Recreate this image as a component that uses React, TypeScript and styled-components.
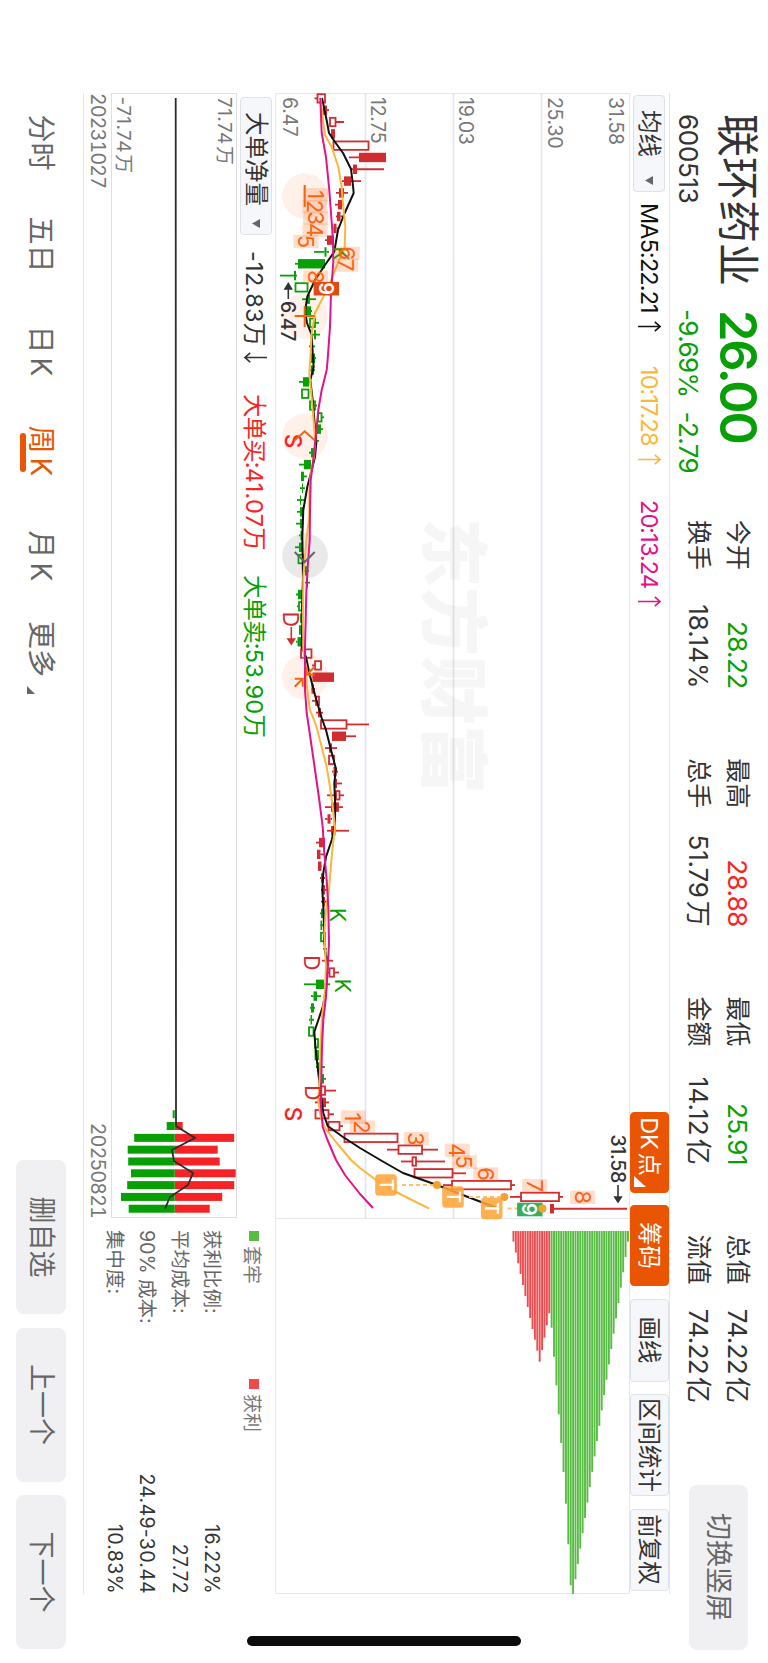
import React from "react";
import styled, { createGlobalStyle } from "styled-components";

const STAGE_WIDTH = 1663;
const STAGE_HEIGHT = 768;

const GREEN = "#06a006";
const RED = "#f82424";
const ORANGE = "#ea5504";
const CANDLE_RED = "#d12c30";
const GRID = "#e3e7ee";

const GlobalStyle = createGlobalStyle`
  body {
    margin: 0;
    background: #fff;
    font-family: Inter, "Noto Sans CJK SC", sans-serif;
    color: #333;
  }
  * {
    box-sizing: border-box;
  }
`;

const Screen = styled.div`
  width: ${STAGE_HEIGHT}px;
  height: ${STAGE_WIDTH}px;
  overflow: hidden;
`;

// The page is designed in landscape and turned onto the portrait screen.
const Stage = styled.div`
  display: grid;
  grid-template-rows: 98px 587px 83px;
  width: ${STAGE_WIDTH}px;
  height: ${STAGE_HEIGHT}px;
  transform-origin: 0 0;
  transform: translateX(${STAGE_HEIGHT}px) rotate(90deg);
  white-space: nowrap;
`;

const Header = styled.header`
  display: flex;
  padding-left: 114px;
`;

const Quote = styled.div`
  display: grid;
  grid-template-columns: 196px 210px;
  grid-template-rows: 60px 39px;
  align-items: center;
`;

const StockName = styled.h1`
  margin: 0;
  font-size: 43px;
  font-weight: 400;
  line-height: 60px;
`;

const Price = styled.div`
  font-size: 50.5px;
  font-weight: 600;
  line-height: 60px;
  letter-spacing: -2.2px;
  color: ${GREEN};
`;

const Code = styled.div`
  font-size: 26px;
  line-height: 39px;
  letter-spacing: -0.3px;
`;

const Change = styled(Code)`
  display: flex;
  gap: 14px;
  margin-left: -1px;
  letter-spacing: -0.6px;
  color: ${GREEN};
`;

const Stats = styled.div`
  display: grid;
  grid-template-columns: repeat(4, 168.5px);
  grid-auto-rows: 39px;
  column-gap: 69.7px;
  padding-top: 11px;
`;

const Stat = styled.div`
  display: flex;
  justify-content: space-between;
  font-size: 25px;
  line-height: 39px;
`;

const StatValue = styled.span<{ $color?: string; $spacing?: number }>`
  font-size: 26px;
  letter-spacing: ${({ $spacing }) => $spacing ?? -0.6}px;
  color: ${({ $color }) => $color ?? "inherit"};
`;

const Unit = styled.span`
  margin-left: 3px;
  letter-spacing: 0;
`;

const SoftButton = styled.button`
  border: 0;
  border-radius: 8px;
  background: #f0f0f3;
  color: #666;
  font: inherit;
  font-size: 27px;
`;

const SwitchButton = styled(SoftButton)`
  width: 165px;
  height: 59px;
  margin: 20px 0 0 81.5px;
  padding: 0 0 4px;
`;

const Middle = styled.div`
  display: flex;
  padding-left: 93px;
`;

const Panels = styled.main`
  width: 1501px;
  height: 587px;
  border-top: 1px solid #e6e6ea;
  border-bottom: 1px solid #e6e6ea;
`;

const HomeBar = styled.div`
  width: 10px;
  height: 274px;
  margin: 149px 0 0 42px;
  border-radius: 5px;
  background: #0c0c0c;
`;

const Toolbar = styled.div`
  display: flex;
  align-items: center;
  height: 39px;
`;

const Picker = styled.button<{ $width: number }>`
  display: flex;
  align-items: center;
  justify-content: space-between;
  width: ${({ $width }) => $width}px;
  height: 32px;
  margin: 0 0 0 2px;
  padding: 0 6px 0 14px;
  border: 1px solid #dde1e8;
  border-radius: 4px;
  background: #f6f7fa;
  color: #333;
  font: inherit;
  font-size: 23.5px;
  line-height: 30px;
`;

const Indicator = styled.span<{ $color: string; $left: number; $width: number }>`
  display: flex;
  align-items: center;
  width: ${({ $width }) => $width}px;
  margin-left: ${({ $left }) => $left}px;
  font-size: 23.5px;
  letter-spacing: -0.9px;
  color: ${({ $color }) => $color};
`;

const Amount = styled.span`
  letter-spacing: 0.3px;
`;

const Trend = styled.svg<{ $down?: boolean }>`
  flex: none;
  margin-left: ${({ $down }) => ($down ? 5 : 8)}px;
`;

const Tools = styled.div`
  display: flex;
  gap: 12.5px;
  margin-left: auto;
  margin-top: -1px;
  padding-right: 3.5px;
`;

const Tool = styled.button<{ $active?: boolean; $width: number }>`
  display: flex;
  align-items: center;
  justify-content: center;
  width: ${({ $width }) => $width}px;
  height: 39px;
  padding: 0 0 2px;
  border: 1px solid ${({ $active }) => ($active ? ORANGE : "#dde1e8")};
  border-radius: 4px;
  background: ${({ $active }) => ($active ? ORANGE : "#f6f7fa")};
  color: ${({ $active }) => ($active ? "#fff" : "#333")};
  font: inherit;
  font-size: 23.5px;
`;

const DkLabel = styled.span`
  word-spacing: -3px;
  letter-spacing: -0.4px;
`;

const Corner = styled.svg`
  align-self: flex-end;
  margin: 0 0 1px;
`;

const Chart = styled.svg`
  display: block;
`;

const Lower = styled.div`
  display: grid;
  grid-template-columns: 1125px 376px;
`;

const SubToolbar = styled(Toolbar)`
  height: 38px;
  padding-left: 2px;
`;

const Dates = styled.div`
  display: flex;
  justify-content: space-between;
  height: 27px;
  font-size: 19.5px;
  line-height: 26px;
  font-variant-numeric: tabular-nums;
  letter-spacing: -0.75px;
  color: #777;
`;

const Cost = styled.aside`
  padding-left: 12px;
`;

const Legend = styled.div`
  display: grid;
  grid-template-columns: 148px auto;
  padding-left: 1px;
  height: 46.5px;
`;

const LegendItem = styled.div<{ $color: string }>`
  display: flex;
  align-items: center;
  gap: 5px;
  height: 42px;
  font-size: 19px;
  color: #777;

  &::before {
    content: "";
    width: 10px;
    height: 10px;
    background: ${({ $color }) => $color};
  }
`;

const CostRow = styled.div`
  display: flex;
  justify-content: space-between;
  height: 32.5px;
  font-size: 19.5px;
  line-height: 32.5px;
  color: #666;
`;

const CostValue = styled.span`
  letter-spacing: 0.3px;
  color: #333;
`;

const Footer = styled.footer`
  display: flex;
  padding-left: 114.5px;
`;

const Tabs = styled.nav`
  display: flex;
  width: 1045.5px;
`;

const Tab = styled.a<{ $width: number; $active?: boolean }>`
  width: ${({ $width }) => $width}px;
  font-size: 28px;
  line-height: 84px;
  word-spacing: -4px;
  color: ${({ $active }) => ($active ? ORANGE : "#666")};
`;

const ActiveMark = styled.div`
  width: 39px;
  height: 6px;
  margin: -27px 0 0 7px;
  border-radius: 3px;
  background: ${ORANGE};
`;

const MoreMark = styled.svg`
  margin-left: 9px;
  vertical-align: -4px;
`;

const Pager = styled.div`
  display: flex;
  gap: 13.5px;
  padding-top: 16.5px;
`;

const PagerButton = styled(SoftButton)`
  width: 154px;
  height: 50px;
  padding: 0 0 4px;
`;

/* ---------- data ---------- */

type StatEntry = { label: string; value: string; unit?: string; color?: string; spacing?: number };

const stats: StatEntry[] = [
  { label: "今开", value: "28.22", color: GREEN },
  { label: "最高", value: "28.88", color: RED },
  { label: "最低", value: "25.91", color: GREEN },
  { label: "总值", value: "74.22", unit: "亿" },
  { label: "换手", value: "18.14%", spacing: 0 },
  { label: "总手", value: "51.79", unit: "万", spacing: -0.2 },
  { label: "金额", value: "14.12", unit: "亿", spacing: 0.2 },
  { label: "流值", value: "74.22", unit: "亿" },
];

const costs = [
  ["获利比例:", "16.22%"],
  ["平均成本:", "27.72"],
  ["90% 成本:", "24.49-30.44"],
  ["集中度:", "10.83%"],
];

// Levels are measured upwards from the bottom of the stage.
const level = (h: number) => STAGE_HEIGHT - h;
const slot = (i: number) => 98.4 + i * 11.812;

// [kind, body low, body high, wick low, wick high]; upper case kinds are solid
type Candle = ["r" | "R" | "g" | "G", number, number, number, number];
const candles: Candle[] = [
  ["r", 317.5, 325, 314.5, 325], ["R", 323, 327, 322, 329], ["r", 330, 335.5, 330, 344],
  ["R", 331, 335, 331, 335], ["r", 333.5, 368.5, 333.5, 368.5], ["R", 359, 386, 349, 386],
  ["R", 353, 357, 351, 384], ["R", 344, 351, 342, 361], ["R", 339, 344, 336, 348],
  ["R", 338, 342, 335, 343], ["R", 337, 340.5, 336, 344], ["R", 333.5, 336.5, 332, 339],
  ["R", 327, 334, 325, 334], ["G", 324.5, 326.5, 314, 329], ["G", 298, 325, 295, 325],
  ["G", 294, 296, 280, 297], ["g", 295.5, 307.5, 295, 308], ["G", 307, 310, 302, 316],
  ["G", 305, 311, 304, 312], ["g", 310, 315, 310, 319], ["G", 314, 316, 311, 320],
  ["G", 310, 313, 309, 315], ["G", 311, 315, 311, 316], ["G", 311, 314, 309, 315],
  ["G", 303, 309, 299, 311], ["g", 302, 308.5, 302, 309], ["g", 310, 315, 309, 317],
  ["g", 318, 321.5, 317, 324], ["G", 317, 321, 316, 323], ["G", 315, 317, 314, 319],
  ["G", 311, 314, 309, 315], ["G", 304, 311, 299, 311], ["G", 301, 304, 301, 307],
  ["G", 302, 303, 300, 305], ["G", 300, 301, 297, 304], ["G", 300, 303, 297, 304],
  ["G", 300, 303, 296, 304], ["G", 300.5, 302, 299, 303], ["G", 299, 302, 295, 303],
  ["g", 298.5, 303, 298, 303], ["G", 305, 307, 303, 309], ["G", 306, 308, 305, 310],
  ["G", 298, 302, 296, 304], ["g", 299, 302, 297, 302], ["G", 300, 302, 300, 303],
  ["G", 299, 302, 299, 303], ["G", 297.5, 301, 296, 302], ["r", 301, 311.5, 300, 312],
  ["r", 315, 321, 312, 321], ["R", 312.5, 334, 312, 334], ["R", 311.5, 314, 311, 315],
  ["r", 316, 319, 312, 319], ["R", 318, 321, 316, 323], ["r", 321, 346.5, 320, 369],
  ["R", 332, 346, 332, 356], ["R", 329, 332, 325, 337], ["r", 329, 334, 329, 335],
  ["R", 333.5, 336.5, 332, 338], ["R", 335, 337, 334, 342], ["r", 336, 339.5, 327, 344],
  ["R", 331, 339, 325, 343], ["R", 327.5, 330.5, 325, 332], ["R", 331, 335.5, 327, 349],
  ["R", 319, 325, 316, 325], ["R", 317, 320.5, 317, 324], ["R", 318, 321.5, 318, 322],
  ["R", 321, 324, 320, 325], ["R", 323, 325, 321, 327], ["R", 323, 325, 321, 327],
  ["G", 321, 324, 320, 324], ["G", 320.5, 322, 320, 326], ["g", 321, 325, 321, 325],
  ["G", 324, 326, 323, 327], ["R", 326, 329, 322, 333], ["r", 329.5, 334, 325, 339],
  ["G", 316, 324, 304, 330], ["G", 313.5, 317, 311, 321], ["G", 311, 314, 310, 315],
  ["G", 310.5, 312, 309, 314], ["g", 309, 313.5, 309, 314], ["g", 315, 318, 315, 318],
  ["g", 315.5, 318, 315, 318], ["G", 318, 320, 316, 325], ["G", 321.5, 324, 321, 326],
  ["r", 321, 325, 320, 336], ["R", 319, 326, 315, 329], ["r", 315.5, 328.5, 315, 334],
  ["r", 328.5, 339.5, 328, 343], ["r", 344.5, 397.5, 344, 398], ["r", 398.5, 422, 387, 438],
  ["r", 412.5, 416, 401, 445], ["r", 414.5, 452.5, 414, 466], ["r", 452, 511, 443, 515],
  ["r", 521, 559, 510, 563], ["R", 550, 554, 550, 627],
];

const ma5: [number, number][] = [
  [98, 322], [122, 327], [133, 329], [142, 335], [153, 343], [169, 351], [183, 352.7], [193, 353.7],
  [213, 344.7], [230, 338], [251.7, 334.3], [265, 325], [280, 315], [296.7, 307.3], [311.7, 305],
  [323, 307], [335, 311.7], [358.7, 313], [367, 313.7], [380, 310.3], [400, 312.7], [420, 314.3],
  [443, 316.3], [457, 315], [470, 311.7], [487, 307.3], [510, 303.3], [537, 302.3], [577, 303],
  [600, 302.3], [627, 302.3], [647, 301.7], [657, 306], [673, 309.3], [695, 315], [718, 321.7],
  [730, 326], [750, 331], [769, 336], [783, 334.3], [807, 335.3], [827, 334.7], [840, 331.7],
  [857, 326], [873, 323.3], [890, 322.3], [913, 323.7], [940, 324], [967, 327.3], [990, 326],
  [1007, 322.7], [1020, 318.3], [1032, 314.3], [1050, 315.7], [1073, 318.3], [1093, 320.7],
  [1113, 323.3], [1126, 327.7], [1137, 343], [1148, 360], [1161, 382], [1173, 403], [1185, 437],
  [1197, 468], [1208, 497],
];

const ma10: [number, number][] = [
  [98, 320.7], [123, 323.3], [135, 325], [147, 331.7], [167, 338.3], [187, 341.7], [207, 343.3],
  [227, 345.3], [247, 344.7], [262, 338.3], [283, 330], [300, 321.7], [313, 315], [333, 311.7],
  [359, 310.3], [373, 309.3], [393, 311.3], [417, 313.3], [440, 315.3], [457, 314], [473, 310.7],
  [493, 309.3], [517, 309.3], [537, 306.7], [560, 304.7], [577, 303.3], [613, 303], [650, 303.3],
  [660, 305], [690, 307.3], [710, 310], [725, 316], [743, 320.7], [767, 326.7], [787, 330],
  [807, 332.7], [827, 335], [850, 332.3], [877, 330], [893, 328.7], [910, 326], [933, 324.3],
  [967, 326], [990, 325], [1017, 322], [1043, 320.7], [1073, 320], [1100, 318.3], [1117, 320.7],
  [1128, 325], [1143, 336.7], [1160, 351], [1168, 360], [1183, 380], [1194, 400], [1208.7, 429.3],
];

const ma20: [number, number][] = [
  [98, 320.3], [133, 321.7], [157, 326], [190, 329.3], [213, 331], [240, 333], [262, 333.3],
  [293, 331], [327, 330], [359, 327.7], [370, 326.7], [390, 321.7], [410, 318.3], [437, 315.7],
  [460, 313.3], [480, 310.7], [510, 310], [540, 309.7], [567, 307.7], [593, 306.3], [620, 305.7],
  [647, 305], [690, 305], [713, 306.7], [740, 310.7], [770, 315], [800, 319.3], [827, 322.7],
  [853, 324.3], [880, 326.7], [907, 328.3], [943, 329], [970, 327.7], [997, 326], [1020, 323.3],
  [1047, 322], [1080, 321.3], [1107, 321], [1127, 322.7], [1140, 327.5], [1160, 336], [1175, 345],
  [1194, 360], [1208, 373],
];

const axis: [string, number][] = [
  ["31.58", 159.5], ["25.30", 220.5], ["19.03", 309], ["12.75", 397.5], ["6.47", 485.5],
];

// nine-count marks: [digit, x, level]
const counts: [string, number, number][] = [
  ["1", 194.8, 315.5], ["2", 206.5, 315], ["3", 218, 315.7], ["4", 230, 315], ["5", 241.5, 306],
  ["6", 253.3, 347.3], ["7", 265, 345.7], ["8", 277, 315.7],
  ["1", 1117, 353.3], ["2", 1127, 362.3], ["3", 1138.7, 416.3], ["4", 1150.3, 457.3],
  ["5", 1162, 464.3], ["6", 1174, 485.7], ["7", 1185.7, 534.7], ["8", 1197.3, 582.7],
];

const nines: [number, number, string][] = [
  [288.7, 326.3, "#e24a14"],
  [1209.5, 529.8, "#37ae58"],
];

type Letter = { text: string; x: number; h: number; color: string; bold?: boolean };
const letters: Letter[] = [
  { text: "K", x: 253.5, h: 341, color: GREEN },
  { text: "K", x: 915, h: 337.7, color: GREEN },
  { text: "K", x: 985.7, h: 342.3, color: GREEN },
  { text: "D", x: 619.3, h: 291, color: CANDLE_RED },
  { text: "D", x: 962.7, h: 312, color: CANDLE_RED },
  { text: "D", x: 1092.7, h: 313, color: CANDLE_RED },
  { text: "S", x: 441, h: 292.7, color: "#fb1f1f", bold: true },
  { text: "S", x: 1114, h: 292.7, color: "#fb1f1f", bold: true },
];

type Bubble = { x: number; fill: string; stroke: string; d: string };
const bubbles: Bubble[] = [
  { x: 196, fill: "#fff0e9", stroke: "#ef6510", d: "M-11 0H11" },
  { x: 316, fill: "#fff0e9", stroke: "#ef6510", d: "M-10 0H11M0 -10V10" },
  { x: 436.3, fill: "#fff0e9", stroke: "#ef6510", d: "M4 -10L-5 0L4 10" },
  { x: 556, fill: "#e9e9e9", stroke: "#666", d: "M-4 -10L6 0L-4 10" },
  {
    x: 676.7,
    fill: "#fff0e9",
    stroke: "#ef6510",
    d: "M-10 -10L-2 -2M-10 -2H-2V-10M10 10L2 2M10 2H2V10",
  },
];

const traps: [number, number, number][] = [
  [1185, 386, 437],
  [1197, 453, 504.3],
  [1208.5, 491.7, 542.3],
];

const profitChips = [
  10.7, 21.7, 32.3, 43, 54, 65, 76, 87, 98, 108.7, 119.7, 130.7, 119, 106.7, 94.3, 82.3,
];
const trappedChips = [
  96.7, 125.7, 154.3, 183.3, 212, 241, 272.7, 313.3, 354.3, 363,
  ...Array.from({ length: 23 }, (_, i) => 348.3 - i * 15.35),
];
const chips = [
  ...profitChips.map((size) => ({ size, color: "#ee4b4f" })),
  ...trappedChips.map((size) => ({ size, color: "#58bb43" })),
];

const flows = [
  [2, 0], [8, 8], [40.5, 59.5], [47, 43], [46.5, 45], [43.7, 61], [47.5, 59.5], [53.7, 47.5], [46, 35],
];

const path = (points: [number, number][]) =>
  points.map(([x, h]) => `${x},${level(h)}`).join(" ");

/* ---------- charts ---------- */

const CandleMark: React.FC<{ index: number; candle: Candle }> = ({ index, candle }) => {
  const [kind, low, high, wickLow, wickHigh] = candle;
  const x = slot(index);
  const color = kind.toLowerCase() === "r" ? CANDLE_RED : "#07a007";
  const solid = kind === "R" || kind === "G";
  return (
    <g stroke={color} strokeWidth={1.8}>
      {wickHigh > high && <path d={`M${x} ${level(high)}V${level(wickHigh)}`} />}
      {wickLow < low && <path d={`M${x} ${level(low)}V${level(wickLow)}`} />}
      {solid ? (
        <rect x={x - 4.7} y={level(high)} width={9.4} height={high - low} fill={color} stroke="none" />
      ) : (
        <rect x={x - 4.2} y={level(high)} width={8.4} height={high - low} fill="#fff" />
      )}
    </g>
  );
};

const PriceChart: React.FC = () => (
  <Chart width={1501} height={355} viewBox="93 138 1501 355">
    <g stroke={GRID} fill="none">
      <path d="M93 138.5H1594M93.5 138V492M1218.5 138V492M1593.5 138V492M93 492.3H1594" />
      <path d="M93 226.5H1218M93 314.5H1218M93 402.5H1218" strokeWidth={1.8} />
    </g>
    <text x={656} y={340} textAnchor="middle" fontSize={69} fontWeight={800} fill="#777" opacity={0.06}>
      东方财富
    </text>
    <g fontSize={19.5} fill="#777" letterSpacing={-0.3}>
      {axis.map(([label, y]) => (
        <text key={label} x={97} y={y}>
          {label}
        </text>
      ))}
    </g>
    {bubbles.map(({ x, fill }) => (
      <circle key={x} cx={x} cy={463} r={22.8} fill={fill} />
    ))}
    {candles.map((candle, i) => (
      <CandleMark key={i} index={i} candle={candle} />
    ))}
    <g fill="none" strokeWidth={2} strokeLinejoin="round">
      <polyline points={path(ma5)} stroke="#111" />
      <polyline points={path(ma10)} stroke="#fdb53c" />
      <polyline points={path(ma20)} stroke="#e0138a" />
    </g>
    {letters.map(({ text, x, h, color, bold }) => (
      <text
        key={x}
        x={x}
        y={level(h) + (bold ? 8.2 : 7.6)}
        textAnchor="middle"
        fontSize={bold ? 22.5 : 21.5}
        fontWeight={bold ? 500 : 400}
        fill={color}
      >
        {text}
      </text>
    ))}
    {bubbles.map(({ x, stroke, d }) => (
      <path key={x} d={d} transform={`translate(${x} 463.3)`} fill="none" stroke={stroke} strokeWidth={2} />
    ))}
    {counts.map(([digit, x, h], i) => (
      <g key={i}>
        <rect x={x - 6.7} y={level(h) - 12.5} width={13.4} height={25} fill="#ff6a1c" opacity={0.22} />
        <text x={x} y={level(h) + 8} textAnchor="middle" fontSize={22} fill="#ff6210">
          {digit}
        </text>
      </g>
    ))}
    {traps.map(([x, h, dot]) => (
      <g key={x}>
        <path
          d={`M${x} ${level(h + 16)}V${level(dot - 4)}`}
          stroke="#fcc070"
          strokeWidth={1.8}
          strokeDasharray="4 3"
        />
        <circle cx={x} cy={level(dot)} r={4} fill="#f3a12f" />
        <rect x={x - 10.8} y={level(h) - 10.8} width={21.6} height={21.6} rx={3.5} fill="#ffa53a" opacity={0.88} />
        <text x={x} y={level(h) + 6.5} textAnchor="middle" fontSize={18} fontWeight={600} fill="#fff">
          T
        </text>
      </g>
    ))}
    {nines.map(([x, h, fill]) => (
      <g key={x}>
        <rect x={x - 6.8} y={level(h) - 12.7} width={13.6} height={25.4} fill={fill} />
        <text x={x} y={level(h) + 7.5} textAnchor="middle" fontSize={20} fontWeight={600} fill="#fff">
          9
        </text>
      </g>
    ))}
    <circle cx={1208.5} cy={level(542.3)} r={4} fill="#f3a12f" />
    <g stroke={CANDLE_RED} fill={CANDLE_RED} strokeWidth={1.6}>
      <path d="M627 476.7H640" />
      <path d="M639 473.5L644 476.7L639 480Z" />
    </g>
    <g stroke="#333" fill="#333" strokeWidth={1.6}>
      <path d="M288 479.7H299" />
      <path d="M289 476.5L283.5 479.7L289 483Z" />
      <path d="M1185 150H1197" />
      <path d="M1197 146.8L1202 150L1197 153.2Z" />
    </g>
    <g fontSize={19.5} fontWeight={500} fill="#333" letterSpacing={-0.4}>
      <text x={301} y={487}>
        6.47
      </text>
      <text x={1134.5} y={157}>
        31.58
      </text>
    </g>
    {chips.map(({ size, color }, i) => (
      <rect key={i} x={1231} y={level(512 + (i + 1) * 2.386)} width={size} height={1.9} fill={color} />
    ))}
  </Chart>
);

const FlowChart: React.FC = () => (
  <Chart width={1125} height={126} viewBox="93 531 1125 126">
    <path d="M93 531.5H1217.5V656.5H93M93.5 531V656" fill="none" stroke="#dcdfe4" />
    <g fontSize={19} fill="#777" letterSpacing={0.4}>
      <text x={97} y={550.5}>
        71.74<tspan dx={1.5}>万</tspan>
      </text>
      <text x={96.5} y={651.5}>
        -71.74<tspan dx={1.5}>万</tspan>
      </text>
    </g>
    {flows.map(([sell, buy], i) => (
      <g key={i}>
        <rect x={slot(i + 86) - 4} y={593.3 - buy} width={8} height={buy} fill="#f62326" />
        <rect x={slot(i + 86) - 4} y={593.3} width={8} height={sell} fill="#06a006" />
      </g>
    ))}
    <polyline
      points="98,592.3 1126,592 1138,573 1150,596 1161,594 1173,575 1185,580 1197,598 1208.7,603"
      fill="none"
      stroke="#2c2c2c"
      strokeWidth={1.8}
    />
  </Chart>
);

const Caret: React.FC = () => (
  <svg width="9" height="8" viewBox="0 0 9 8">
    <path d="M0 0H9L4.5 8Z" fill="#666" />
  </svg>
);

const Arrow: React.FC<{ down?: boolean }> = ({ down }) => (
  <Trend $down={down} width="11" height="23" viewBox="0 0 11 23" fill="none" stroke="currentColor" strokeWidth="1.6">
    <path d={down ? "M5.5 0V22M0.8 16.8L5.5 22L10.2 16.8" : "M5.5 23V1M0.8 6.2L5.5 1L10.2 6.2"} />
  </Trend>
);

const App: React.FC = () => {
  return (
    <Screen>
      <GlobalStyle />
      <Stage>
        <Header>
          <Quote>
            <StockName>联环药业</StockName>
            <Price>26.00</Price>
            <Code>600513</Code>
            <Change>
              <span>-9.69%</span>
              <span>-2.79</span>
            </Change>
          </Quote>
          <Stats>
            {stats.map(({ label, value, unit, color, spacing }) => (
              <Stat key={label}>
                {label}
                <StatValue $color={color} $spacing={spacing}>
                  {value}
                  {unit && <Unit>{unit}</Unit>}
                </StatValue>
              </Stat>
            ))}
          </Stats>
          <SwitchButton>切换竖屏</SwitchButton>
        </Header>

        <Middle>
          <Panels>
            <Toolbar>
              <Picker $width={97}>
                均线
                <Caret />
              </Picker>
              <Indicator $color="#111" $left={11} $width={150}>
                MA5:22.21
                <Arrow />
              </Indicator>
              <Indicator $color="#fdb53c" $left={13} $width={124}>
                10:17.28
                <Arrow />
              </Indicator>
              <Indicator $color="#e0138a" $left={10} $width={130}>
                20:13.24
                <Arrow />
              </Indicator>
              <Tools>
                <Tool $active $width={81}>
                  <DkLabel>DK 点</DkLabel>
                  <Corner width="11" height="12" viewBox="0 0 11 12">
                    <path d="M11 0V12H0Z" fill="#fff" />
                  </Corner>
                </Tool>
                <Tool $active $width={81}>
                  筹码
                </Tool>
                <Tool $width={83}>画线</Tool>
                <Tool $width={102}>区间统计</Tool>
                <Tool $width={82}>前复权</Tool>
              </Tools>
            </Toolbar>
            <PriceChart />
            <Lower>
              <div>
                <SubToolbar>
                  <Picker $width={138}>
                    大单净量
                    <Caret />
                  </Picker>
                  <Indicator $color="#333" $left={16} $width={127}>
                    <Amount>-12.83万</Amount>
                    <Arrow down />
                  </Indicator>
                  <Indicator $color={RED} $left={16} $width={165}>
                    大单买:<Amount>41.07万</Amount>
                  </Indicator>
                  <Indicator $color={GREEN} $left={16} $width={165}>
                    大单卖:<Amount>53.90万</Amount>
                  </Indicator>
                </SubToolbar>
                <FlowChart />
                <Dates>
                  <span>20231027</span>
                  <span>20250821</span>
                </Dates>
              </div>
              <Cost>
                <Legend>
                  <LegendItem $color="#58bb43">套牢</LegendItem>
                  <LegendItem $color="#ee4b4f">获利</LegendItem>
                </Legend>
                {costs.map(([label, value]) => (
                  <CostRow key={label}>
                    {label}
                    <CostValue>{value}</CostValue>
                  </CostRow>
                ))}
              </Cost>
            </Lower>
          </Panels>
          <HomeBar />
        </Middle>

        <Footer>
          <Tabs>
            <Tab $width={102}>分时</Tab>
            <Tab $width={109}>五日</Tab>
            <Tab $width={100}>日 K</Tab>
            <Tab $width={105} $active>
              周 K
              <ActiveMark />
            </Tab>
            <Tab $width={90.5}>月 K</Tab>
            <Tab $width={90}>
              更多
              <MoreMark width="8" height="8" viewBox="0 0 8 8">
                <path d="M8 0V8H0Z" fill="#666" />
              </MoreMark>
            </Tab>
          </Tabs>
          <Pager>
            <PagerButton>删自选</PagerButton>
            <PagerButton>上一个</PagerButton>
            <PagerButton>下一个</PagerButton>
          </Pager>
        </Footer>
      </Stage>
    </Screen>
  );
};

export default App;
